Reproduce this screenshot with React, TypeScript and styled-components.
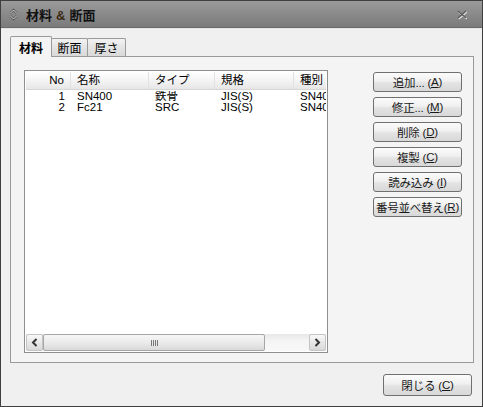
import React from 'react';
import styled, { createGlobalStyle } from 'styled-components';

const GlobalStyle = createGlobalStyle`
  body {
    margin: 0;
    background: #f0f0f0;
    font-family: "Liberation Sans", "Noto Sans CJK JP", sans-serif;
  }
`;

const Window = styled.div`
  width: 483px;
  height: 407px;
  box-sizing: border-box;
  border: 1px solid #3f3f3f;
  background: #f0f0f0;
  display: flex;
  flex-direction: column;
  overflow: hidden;
`;

const TitleBar = styled.div`
  height: 27px;
  box-sizing: border-box;
  display: flex;
  align-items: center;
  padding: 0 14px 0 8px;
  background: linear-gradient(#9b9b9b, #8a8a8a 50%, #7b7b7b);
  border-bottom: 1px solid #6a6a6a;
  box-shadow: 0 1px 0 #e4e4e4;
`;

const TitleText = styled.span`
  margin-left: 8px;
  font-size: 13px;
  font-weight: bold;
  color: #111;
`;

const Amp = styled.span`
  color: #3a2a14;
  margin: 0 4px;
`;

const Spacer = styled.div`
  flex: 1;
`;

const Body = styled.div`
  flex: 1;
  display: flex;
  flex-direction: column;
  padding: 8px 8px 0 9px;
`;

const TabStrip = styled.div`
  height: 20px;
  display: flex;
  align-items: flex-end;
  padding-left: 1px;
`;

const Tab = styled.div<{ $active?: boolean; $width: number }>`
  position: relative;
  box-sizing: border-box;
  width: ${(p) => p.$width}px;
  height: ${(p) => (p.$active ? 21 : 18)}px;
  margin-bottom: ${(p) => (p.$active ? -1 : 0)}px;
  margin-left: -1px;
  z-index: ${(p) => (p.$active ? 2 : 1)};
  border: 1px solid #9a9a9a;
  border-bottom: none;
  border-radius: 2px 2px 0 0;
  background: ${(p) => (p.$active ? '#f4f4f4' : 'linear-gradient(#f2f2f2, #e4e4e4 50%, #d9d9d9)')};
  display: flex;
  align-items: center;
  justify-content: center;
  font-family: "Noto Sans CJK JP", sans-serif;
  font-size: 12px;
  font-weight: ${(p) => (p.$active ? 'bold' : 'normal')};
  color: #000;
  padding-top: ${(p) => (p.$active ? 1 : 0)}px;
`;

const Panel = styled.div`
  height: 307px;
  box-sizing: border-box;
  border: 1px solid #9a9a9a;
  background: #f4f4f4;
  display: flex;
  padding: 13px 11px 9px 13px;
`;

const ListBox = styled.div`
  width: 304px;
  box-sizing: border-box;
  border: 1px solid #8f8f8f;
  background: #fff;
  padding: 1px;
  display: flex;
  flex-direction: column;
`;

const Rows = styled.div`
  flex: 1;
  overflow: hidden;
`;

const columns = '45px 78px 66px 79px 80px';

const HeaderRow = styled.div`
  display: grid;
  grid-template-columns: ${columns};
  height: 17px;
  background: linear-gradient(#ffffff, #f4f4f4 50%, #e6e6e6);
  border-bottom: 1px solid #d6d6d6;
  margin-bottom: 1px;
`;

const HeaderCell = styled.div<{ $align?: string }>`
  box-sizing: border-box;
  padding: 0 6px;
  border-right: 1px solid #e2e2e2;
  text-align: ${(p) => p.$align || 'left'};
  font-size: 11.5px;
  line-height: 17px;
  white-space: nowrap;
  overflow: hidden;
  color: #000;
`;

const DataRow = styled.div`
  display: grid;
  grid-template-columns: ${columns};
  height: 11px;
`;

const Cell = styled.div<{ $align?: string }>`
  padding: 0 6px;
  text-align: ${(p) => p.$align || 'left'};
  font-size: 11.5px;
  line-height: 11px;
  white-space: nowrap;
  overflow: hidden;
  color: #000;
`;

const HScroll = styled.div`
  height: 17px;
  display: flex;
  background: linear-gradient(#e8e8e8, #f4f4f4 40%, #f9f9f9);
`;

const ScrollArrow = styled.div`
  width: 17px;
  height: 17px;
  box-sizing: border-box;
  border: 1px solid #c4c4c4;
  border-radius: 2px;
  background: linear-gradient(#f8f8f8, #e6e6e6 55%, #d8d8d8);
  display: flex;
  align-items: center;
  justify-content: center;
`;

const Track = styled.div`
  flex: 1;
  display: flex;
`;

const Thumb = styled.div`
  width: 222px;
  height: 17px;
  box-sizing: border-box;
  border: 1px solid #a6a6a6;
  border-radius: 2px;
  background: linear-gradient(#f6f6f6, #ebebeb 50%, #d9d9d9);
  display: flex;
  align-items: center;
  justify-content: center;
`;

const Grip = styled.div`
  display: flex;
  gap: 1px;
`;

const GripLine = styled.span`
  width: 1px;
  height: 6px;
  background: #777;
`;

const ButtonColumn = styled.div`
  margin-left: 45px;
  padding-top: 2px;
  display: flex;
  flex-direction: column;
  gap: 5px;
`;

const DialogButton = styled.button`
  width: 89px;
  height: 20px;
  box-sizing: border-box;
  border: 1px solid #707070;
  border-radius: 3px;
  background: linear-gradient(#fbfbfb, #f0f0f0 45%, #e3e3e3 55%, #d8d8d8);
  padding: 0;
  font-family: "Liberation Sans", "Noto Sans CJK JP", sans-serif;
  font-size: 11.5px;
  letter-spacing: -0.2px;
  color: #1a1a1a;
  white-space: nowrap;
  display: flex;
  align-items: center;
  justify-content: center;
`;

const Key = styled.span`
  text-decoration: underline;
`;

const Footer = styled.div`
  display: flex;
  justify-content: flex-end;
  padding: 11px 2px 0 0;
`;

const CloseButton = styled(DialogButton)`
  height: 22px;
`;

const materials = [
  { no: 1, name: 'SN400', type: '鉄骨', spec: 'JIS(S)', kind: 'SN400' },
  { no: 2, name: 'Fc21', type: 'SRC', spec: 'JIS(S)', kind: 'SN400' },
];

const actions = [
  { label: '追加... ', key: 'A' },
  { label: '修正... ', key: 'M' },
  { label: '削除 ', key: 'D' },
  { label: '複製 ', key: 'C' },
  { label: '読み込み ', key: 'I' },
  { label: '番号並べ替え', key: 'R' },
];

const UpDownIcon = () => (
  <svg width="9" height="13" viewBox="0 0 9 13">
    <path d="M1.5 5 L4.5 2 L7.5 5" fill="none" stroke="#505050" strokeWidth="2.2" />
    <path d="M1.5 5 L4.5 2 L7.5 5" fill="none" stroke="#dadada" strokeWidth="1" />
    <path d="M1.5 8 L4.5 11 L7.5 8" fill="none" stroke="#505050" strokeWidth="2.2" />
    <path d="M1.5 8 L4.5 11 L7.5 8" fill="none" stroke="#dadada" strokeWidth="1" />
  </svg>
);

const CloseGlyph = () => (
  <svg width="12" height="11" viewBox="0 0 12 11">
    <path d="M2 2 L10 9 M10 2 L2 9" stroke="#e6e6e6" strokeWidth="1.6" transform="translate(0.7 0.8)" />
    <path d="M2 2 L10 9 M10 2 L2 9" stroke="#5c5c5c" strokeWidth="1.6" />
  </svg>
);

const Chevron = ({ dir }: { dir: 'left' | 'right' }) => (
  <svg width="7" height="9" viewBox="0 0 7 9">
    <path
      d={dir === 'left' ? 'M5.5 1 L2 4.5 L5.5 8' : 'M1.5 1 L5 4.5 L1.5 8'}
      fill="none"
      stroke="#333"
      strokeWidth="2"
    />
  </svg>
);

const App: React.FC = () => {
  return (
    <>
      <GlobalStyle />
      <Window>
        <TitleBar>
          <UpDownIcon />
          <TitleText>
            材料<Amp>&amp;</Amp>断面
          </TitleText>
          <Spacer />
          <CloseGlyph />
        </TitleBar>
        <Body>
          <TabStrip>
            <Tab $active $width={42}>材料</Tab>
            <Tab $width={37}>断面</Tab>
            <Tab $width={39}>厚さ</Tab>
          </TabStrip>
          <Panel>
            <ListBox>
              <Rows>
                <HeaderRow>
                  <HeaderCell $align="right">No</HeaderCell>
                  <HeaderCell>名称</HeaderCell>
                  <HeaderCell>タイプ</HeaderCell>
                  <HeaderCell>規格</HeaderCell>
                  <HeaderCell>種別</HeaderCell>
                </HeaderRow>
                {materials.map((m) => (
                  <DataRow key={m.no}>
                    <Cell $align="right">{m.no}</Cell>
                    <Cell>{m.name}</Cell>
                    <Cell>{m.type}</Cell>
                    <Cell>{m.spec}</Cell>
                    <Cell>{m.kind}</Cell>
                  </DataRow>
                ))}
              </Rows>
              <HScroll>
                <ScrollArrow>
                  <Chevron dir="left" />
                </ScrollArrow>
                <Track>
                  <Thumb>
                    <Grip>
                      {[0, 1, 2, 3].map((i) => (
                        <GripLine key={i} />
                      ))}
                    </Grip>
                  </Thumb>
                </Track>
                <ScrollArrow>
                  <Chevron dir="right" />
                </ScrollArrow>
              </HScroll>
            </ListBox>
            <ButtonColumn>
              {actions.map((a) => (
                <DialogButton key={a.key}>
                  {a.label}(<Key>{a.key}</Key>)
                </DialogButton>
              ))}
            </ButtonColumn>
          </Panel>
          <Footer>
            <CloseButton>
              閉じる (<Key>C</Key>)
            </CloseButton>
          </Footer>
        </Body>
      </Window>
    </>
  );
};

export default App;
